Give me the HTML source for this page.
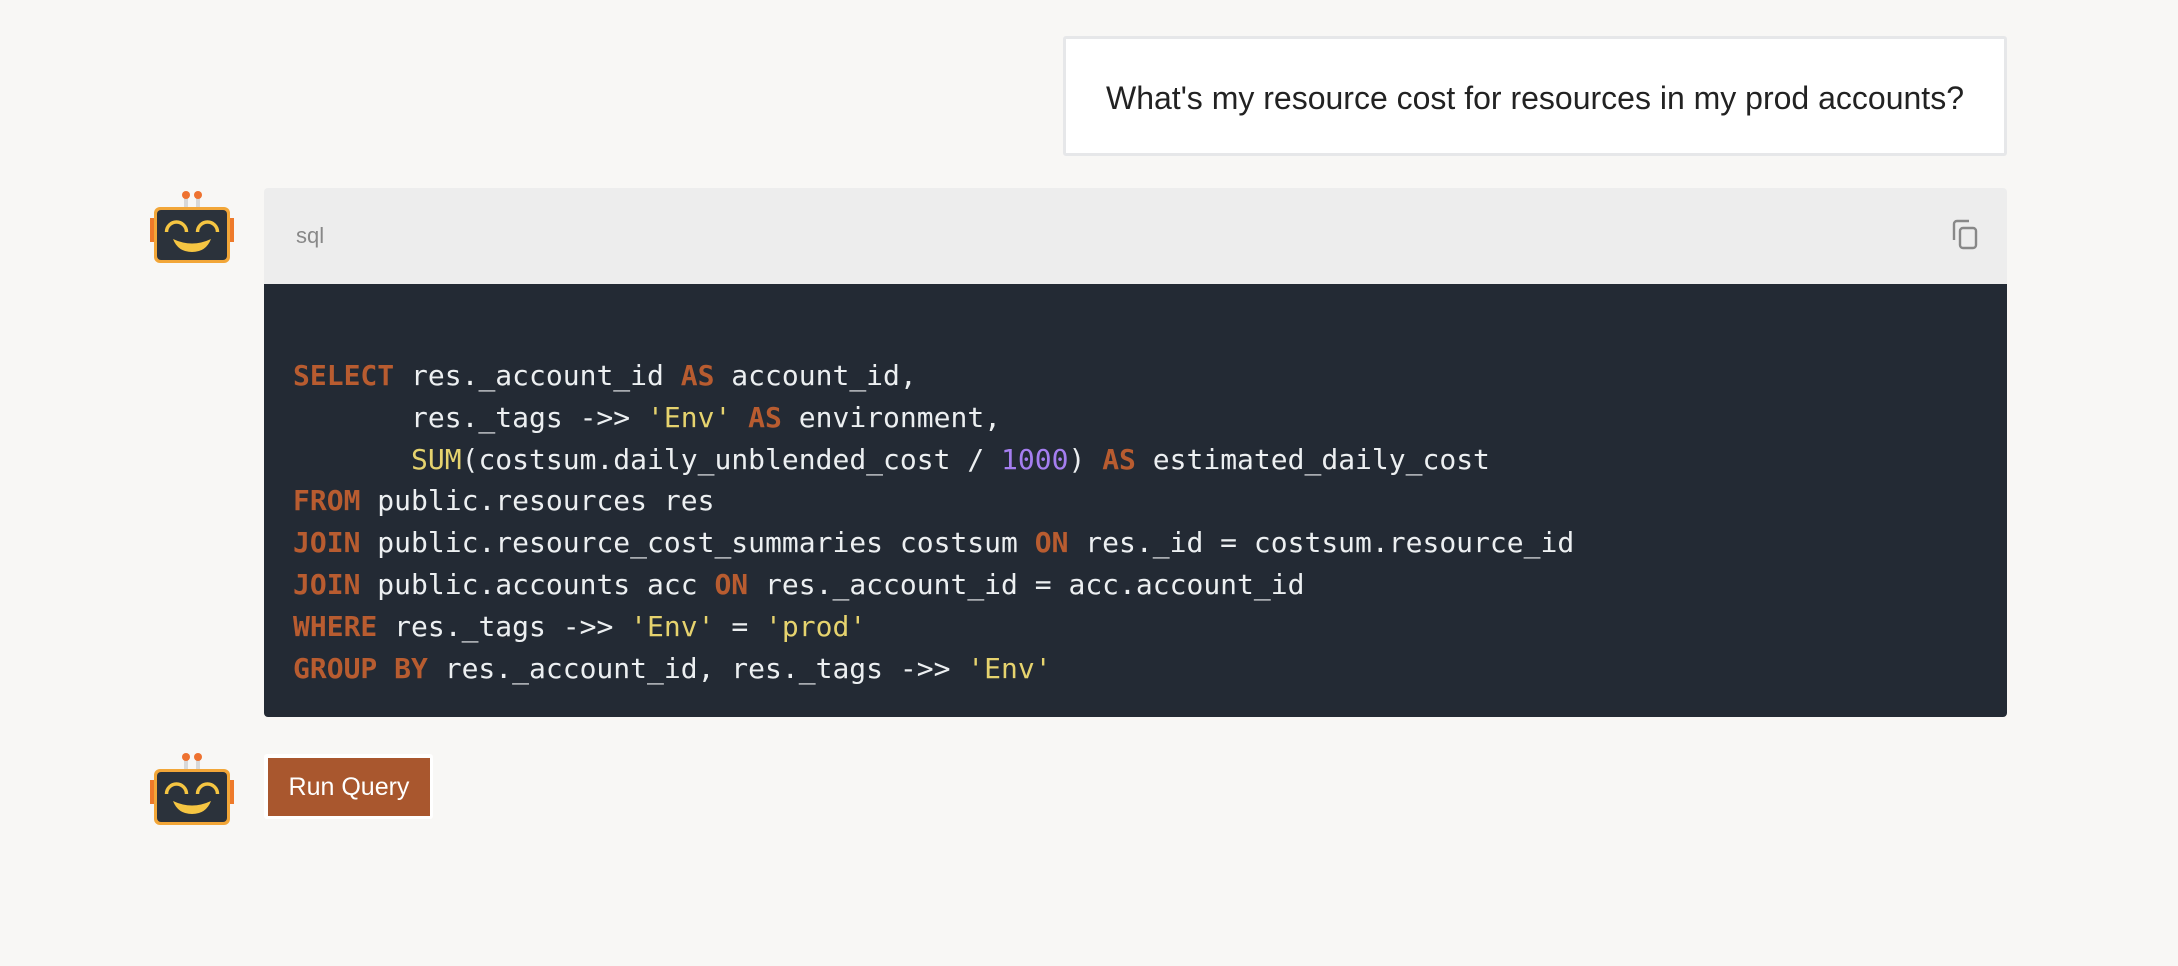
<!DOCTYPE html>
<html><head><meta charset="utf-8"><style>
html,body{margin:0;padding:0;background:#f8f7f5;width:2178px;height:966px;overflow:hidden;position:relative;font-family:"Liberation Sans",Arial,sans-serif}
.user{position:absolute;left:1063px;top:36px;width:938px;height:114px;background:#fff;border:3px solid #e6e7e9;border-radius:3px;display:flex;align-items:center;justify-content:center;font-size:32px;color:#222;padding-top:4px;box-sizing:content-box;height:110px}
.hdr{position:absolute;left:264px;top:188px;width:1743px;height:96px;background:#ededed;border-radius:4px 4px 0 0}
.hdr .l{position:absolute;left:32px;top:35px;font-size:22px;color:#888}
.code{position:absolute;left:264px;top:284px;width:1743px;height:433px;background:#232a34;border-radius:0 0 4px 4px}
pre{margin:0;position:absolute;left:29px;top:71px;font-family:"DejaVu Sans Mono","Liberation Mono",monospace;font-size:28px;line-height:41.8px;color:#eceff1}
.k{color:#b85c30;font-weight:bold}.s{color:#e6d36e}.n{color:#a57ef0}
.btnw{position:absolute;left:264px;top:754px;width:169px;height:65px;background:#fff;border-radius:3px}
.btn{position:absolute;left:4px;top:4px;width:162px;height:58px;background:#a9572e;color:#fff;font-size:25px;display:flex;align-items:center;justify-content:center}
.bot{position:absolute;left:150px;width:84px;height:80px}
</style></head><body>
<div class="user">What's my resource cost for resources in my prod accounts?</div>

<svg class="bot" style="top:188px" viewBox="0 0 84 80">
<rect x="34" y="6" width="4" height="14" fill="#d8d8d8"/><rect x="46" y="6" width="4" height="14" fill="#d8d8d8"/>
<circle cx="36" cy="7" r="4" fill="#ee7230"/><circle cx="48" cy="7" r="4" fill="#ee7230"/>
<rect x="0" y="30" width="4" height="24" fill="#ee7a2a"/><rect x="80" y="30" width="4" height="24" fill="#ee7a2a"/>
<rect x="4" y="19" width="76" height="56" rx="6" fill="#f2a638"/>
<rect x="7" y="22" width="70" height="50" rx="4" fill="#2b323b"/>
<path d="M16.5 44 A10 10 0 0 1 36.5 44" stroke="#f5c542" stroke-width="3.5" fill="none"/>
<path d="M47.5 44 A10 10 0 0 1 67.5 44" stroke="#f5c542" stroke-width="3.5" fill="none"/>
<path d="M23 51 Q42 60 61 51 Q56 64 42 64 Q28 64 23 51Z" fill="#f5c542"/>
</svg>

<div class="hdr"><div class="l">sql</div>
<svg style="position:absolute;left:1686px;top:30px" width="32" height="34" viewBox="0 0 32 34" fill="none" stroke="#888" stroke-width="2.4"><path d="M4 22V6a3 3 0 0 1 3-3h12"/><rect x="10" y="10" width="16" height="20" rx="3"/></svg>
</div>
<div class="code"><pre><span class="k">SELECT</span> res._account_id <span class="k">AS</span> account_id,
       res._tags -&gt;&gt; <span class="s">'Env'</span> <span class="k">AS</span> environment,
       <span class="s">SUM</span>(costsum.daily_unblended_cost / <span class="n">1000</span>) <span class="k">AS</span> estimated_daily_cost
<span class="k">FROM</span> public.resources res
<span class="k">JOIN</span> public.resource_cost_summaries costsum <span class="k">ON</span> res._id = costsum.resource_id
<span class="k">JOIN</span> public.accounts acc <span class="k">ON</span> res._account_id = acc.account_id
<span class="k">WHERE</span> res._tags -&gt;&gt; <span class="s">'Env'</span> = <span class="s">'prod'</span>
<span class="k">GROUP BY</span> res._account_id, res._tags -&gt;&gt; <span class="s">'Env'</span></pre></div>

<svg class="bot" style="top:750px" viewBox="0 0 84 80">
<rect x="34" y="6" width="4" height="14" fill="#d8d8d8"/><rect x="46" y="6" width="4" height="14" fill="#d8d8d8"/>
<circle cx="36" cy="7" r="4" fill="#ee7230"/><circle cx="48" cy="7" r="4" fill="#ee7230"/>
<rect x="0" y="30" width="4" height="24" fill="#ee7a2a"/><rect x="80" y="30" width="4" height="24" fill="#ee7a2a"/>
<rect x="4" y="19" width="76" height="56" rx="6" fill="#f2a638"/>
<rect x="7" y="22" width="70" height="50" rx="4" fill="#2b323b"/>
<path d="M16.5 44 A10 10 0 0 1 36.5 44" stroke="#f5c542" stroke-width="3.5" fill="none"/>
<path d="M47.5 44 A10 10 0 0 1 67.5 44" stroke="#f5c542" stroke-width="3.5" fill="none"/>
<path d="M23 51 Q42 60 61 51 Q56 64 42 64 Q28 64 23 51Z" fill="#f5c542"/>
</svg>
<div class="btnw"><div class="btn">Run Query</div></div>
</body></html>
